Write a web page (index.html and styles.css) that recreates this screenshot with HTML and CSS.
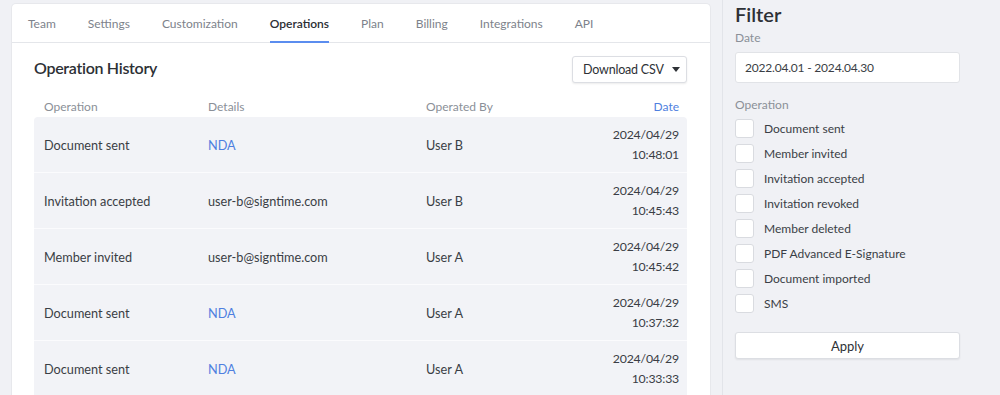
FILE: index.html
```html
<!DOCTYPE html>
<html>
<head>
<meta charset="utf-8">
<link rel="stylesheet" href="styles.css">
</head>
<body>
<div class="main">
  <div class="card">
    <nav class="tabs">
      <span class="tab">Team</span>
      <span class="tab">Settings</span>
      <span class="tab">Customization</span>
      <span class="tab active">Operations</span>
      <span class="tab">Plan</span>
      <span class="tab">Billing</span>
      <span class="tab">Integrations</span>
      <span class="tab">API</span>
    </nav>
    <div class="content">
      <div class="head">
        <h2 class="title">Operation History</h2>
        <button class="btn-csv">Download CSV <svg class="caret" width="8" height="5" viewBox="0 0 8 5"><path d="M0 0H8L4 5Z" fill="#2e3136"/></svg></button>
      </div>
      <div class="table">
        <div class="thead">
          <span>Operation</span><span>Details</span><span>Operated By</span><span class="date-h">Date</span>
        </div>
        <div class="row"><span>Document sent</span><span class="link">NDA</span><span>User B</span><span class="date">2024/04/29<br>10:48:01</span></div>
        <div class="row"><span>Invitation accepted</span><span>user-b@signtime.com</span><span>User B</span><span class="date">2024/04/29<br>10:45:43</span></div>
        <div class="row"><span>Member invited</span><span>user-b@signtime.com</span><span>User A</span><span class="date">2024/04/29<br>10:45:42</span></div>
        <div class="row"><span>Document sent</span><span class="link">NDA</span><span>User A</span><span class="date">2024/04/29<br>10:37:32</span></div>
        <div class="row"><span>Document sent</span><span class="link">NDA</span><span>User A</span><span class="date">2024/04/29<br>10:33:33</span></div>
      </div>
    </div>
  </div>
</div>
<aside class="filter">
  <h3 class="filter-title">Filter</h3>
  <div class="label">Date</div>
  <div class="input">2022.04.01 - 2024.04.30</div>
  <div class="label op-label">Operation</div>
  <ul class="checks">
    <li><span class="box"></span>Document sent</li>
    <li><span class="box"></span>Member invited</li>
    <li><span class="box"></span>Invitation accepted</li>
    <li><span class="box"></span>Invitation revoked</li>
    <li><span class="box"></span>Member deleted</li>
    <li><span class="box"></span>PDF Advanced E-Signature</li>
    <li><span class="box"></span>Document imported</li>
    <li><span class="box"></span>SMS</li>
  </ul>
  <button class="apply">Apply</button>
</aside>
</body>
</html>
```
FILE: styles.css
```css
* { box-sizing: border-box; }
html, body { margin: 0; padding: 0; }
body {
  background: #f0f1f5;
  font-family: "Lato", "Noto Sans", sans-serif;
  color: #3a3e45;
  display: flex;
  height: 395px;
  overflow: hidden;
}
.main {
  width: 723px;
  height: 395px;
  padding: 3px 11px 0 11px;
  border-right: 1px solid #e2e4e9;
}
.card {
  background: #fff;
  border: 1px solid #e7e8ec;
  border-bottom: none;
  border-radius: 5px 5px 0 0;
  height: 100%;
  overflow: hidden;
}
.tabs {
  display: flex;
  height: 39px;
  border-bottom: 1px solid #e4e6ea;
  padding-left: 16px;
}
.tab {
  font-size: 12px;
  color: #7d828b;
  padding: 12px 0 0;
  margin-right: 32px;
  position: relative;
}
.tab.active {
  color: #2b2e33;
  font-weight: 600;
}
.tab.active::after {
  content: "";
  position: absolute;
  left: 0; right: 0; bottom: -1px;
  height: 2px;
  background: #5b8def;
}
.content { padding: 13px 23px 0 22px; }
.head {
  display: flex;
  justify-content: space-between;
  align-items: center;
  height: 27px;
}
.title {
  margin: 0;
  font-size: 16px;
  letter-spacing: -0.3px;
  font-weight: 600;
  color: #2d3035;
  position: relative;
  top: -2px;
}
.btn-csv {
  font-family: inherit;
  font-size: 12.5px;
  letter-spacing: -0.2px;
  color: #2e3136;
  background: #fff;
  border: 1px solid #dcdee3;
  border-radius: 3px;
  box-shadow: 0 1px 2px rgba(0,0,0,0.08);
  height: 27px;
  width: 115px;
  padding: 0 0 0 10px;
  display: flex;
  align-items: center;
  gap: 8px;
  white-space: nowrap;
}
.thead, .row {
  display: grid;
  grid-template-columns: 164px 218px 1fr auto;
  padding: 0 8px 0 10px;
}
.thead {
  margin-top: 12px;
  height: 22px;
  align-items: center;
  font-size: 12px;
  color: #8b9098;
}
.date-h { color: #4f7fe0; }
.row {
  background: #f2f3f7;
  height: 56px;
  align-items: center;
  font-size: 12.7px;
  color: #3a3e45;
  border-top: 1px solid #fbfbfd;
}
.thead + .row { border-top: none; border-radius: 4px 4px 0 0; height: 55px; }
.link { color: #4f7fe0; }
.date {
  text-align: right;
  line-height: 20px;
  font-size: 12.3px;
  letter-spacing: -0.2px;
}

.filter {
  padding: 2px 0 0 12px;
  width: 260px;
}
.filter-title {
  margin: 0;
  font-size: 20px;
  font-weight: 600;
  color: #2d3035;
  line-height: 24px;
}
.label {
  font-size: 12px;
  color: #8b9098;
  margin-top: 4px;
  line-height: 16px;
}
.input {
  margin-top: 6px;
  width: 225px;
  height: 31px;
  background: #fff;
  border: 1px solid #e1e3e7;
  border-radius: 3px;
  font-size: 12px;
  letter-spacing: -0.2px;
  padding: 0 9px;
  display: flex;
  align-items: center;
  color: #3a3e45;
}
.op-label { margin-top: 14px; }
.checks {
  list-style: none;
  margin: 3px 0 0;
  padding: 0;
}
.checks li {
  display: flex;
  align-items: center;
  height: 25px;
  font-size: 12px;
  color: #3a3e45;
}
.box {
  width: 19px;
  height: 19px;
  background: #fff;
  border: 1px solid #d9dbe0;
  border-radius: 3px;
  margin-right: 10px;
}
.apply {
  margin-top: 16px;
  width: 225px;
  height: 27px;
  font-family: inherit;
  font-size: 13px;
  color: #2e3136;
  background: #fff;
  border: 1px solid #dcdee3;
  border-radius: 3px;
  box-shadow: 0 1px 2px rgba(0,0,0,0.07);
}
```
